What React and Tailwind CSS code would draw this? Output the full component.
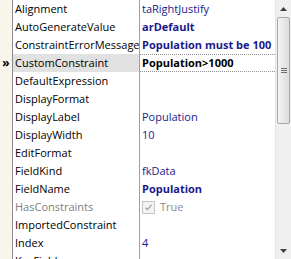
import React from "react";

const rows = [
  { name: "Alignment", value: "taRightJustify" },
  { name: "AutoGenerateValue", value: "arDefault", bold: true },
  { name: "ConstraintErrorMessage", value: "Population must be 100", bold: true },
  { name: "CustomConstraint", value: "Population>1000", bold: true, selected: true },
  { name: "DefaultExpression", value: "" },
  { name: "DisplayFormat", value: "" },
  { name: "DisplayLabel", value: "Population" },
  { name: "DisplayWidth", value: "10" },
  { name: "EditFormat", value: "" },
  { name: "FieldKind", value: "fkData" },
  { name: "FieldName", value: "Population", bold: true },
  { name: "HasConstraints", value: "True", disabled: true },
  { name: "ImportedConstraint", value: "" },
  { name: "Index", value: "4" },
  { name: "KeyFields", value: "" },
];

function Row({ r }) {
  return (
    <div className="flex h-[18px] shrink-0">
      <div className="w-[13px] shrink-0 bg-[#f8f5ea] border-r border-[#8c8c8c] flex items-center justify-center text-[12px] font-bold leading-none text-black">
        {r.selected ? "»" : ""}
      </div>
      <div
        className={
          "w-[127px] shrink-0 pl-[2px] flex items-center whitespace-nowrap overflow-hidden border-r border-[#a0a0a0] " +
          (r.selected ? "bg-[#e1e1e1] " : "bg-white ") +
          (r.disabled ? "text-[#808080]" : "text-black")
        }
      >
        {r.name}
      </div>
      <div
        className={
          "flex-1 min-w-0 pl-[2px] flex items-center whitespace-nowrap overflow-hidden bg-white " +
          (r.selected ? "border-y border-dotted border-[#909090] text-black " : "text-[#1a1a8c] ") +
          (r.bold ? "font-bold" : "")
        }
      >
        {r.disabled ? (
          <span className="flex items-center gap-[5px] text-[#8a8a8a]">
            <span className="w-[13px] h-[13px] border border-[#c4c4c4] bg-[#f4f4f4] flex items-center justify-center">
              <svg width="9" height="9" viewBox="0 0 9 9">
                <path d="M1.5 4.8 L3.5 6.8 L7.5 1.8" fill="none" stroke="#a8a8a8" strokeWidth="1.4" />
              </svg>
            </span>
            {r.value}
          </span>
        ) : (
          r.value
        )}
      </div>
    </div>
  );
}

export default function App() {
  return (
    <div
      className="w-[291px] h-[259px] overflow-hidden flex bg-white text-[11px]"
      style={{ fontFamily: '"Open Sans", "Noto Sans", sans-serif' }}
    >
      <div className="flex-1 min-w-0 flex flex-col">
        {rows.map((r) => (
          <Row key={r.name} r={r} />
        ))}
      </div>
      <div className="w-[16px] shrink-0 bg-[#f0f0f0] border-l border-[#e4e4e4] flex flex-col">
        <div className="h-[17px] flex items-center justify-center">
          <svg width="7" height="4" viewBox="0 0 7 4">
            <path d="M0 4 L3.5 0 L7 4 Z" fill="#404040" />
          </svg>
        </div>
        <div className="h-[107px] mx-[1px] rounded-[2px] border border-[#a8a8a8] bg-gradient-to-r from-[#f4f4f4] to-[#dcdcdc] flex flex-col items-center justify-center gap-[1px]">
          <div className="w-[6px] h-[1px] bg-[#707070]" />
          <div className="w-[6px] h-[1px] bg-[#707070]" />
          <div className="w-[6px] h-[1px] bg-[#707070]" />
        </div>
        <div className="flex-1" />
        <div className="h-[17px] flex items-center justify-center">
          <svg width="7" height="4" viewBox="0 0 7 4">
            <path d="M0 0 L7 0 L3.5 4 Z" fill="#404040" />
          </svg>
        </div>
      </div>
    </div>
  );
}
